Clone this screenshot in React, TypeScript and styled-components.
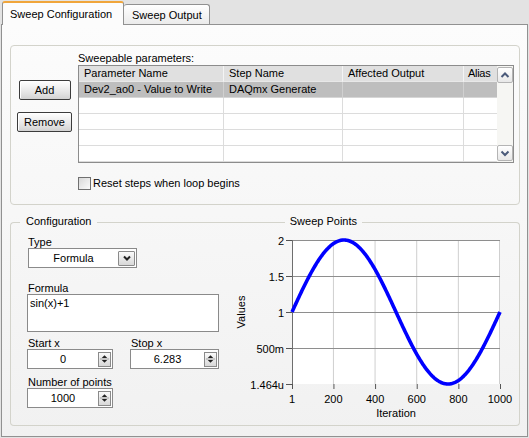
import React from "react";
import styled, { createGlobalStyle } from "styled-components";

const GlobalStyle = createGlobalStyle`
  html, body {
    margin: 0;
    padding: 0;
  }
  body {
    background: #e3e3e3;
    font-family: "Liberation Sans", Arial, sans-serif;
    font-size: 11px;
    color: #000;
  }
  * {
    box-sizing: border-box;
  }
`;

const columns = [
  { title: "Parameter Name", width: 145 },
  { title: "Step Name", width: 119 },
  { title: "Affected Output", width: 121 },
  { title: "Alias", width: 33 },
];

const rows = [
  ["Dev2_ao0 - Value to Write", "DAQmx Generate", "", ""],
  ["", "", "", ""],
  ["", "", "", ""],
  ["", "", "", ""],
  ["", "", "", ""],
];

// plot geometry inside the chart svg
const PL = 62;
const PR = 270;
const PT = 4;
const PB = 148;

const xPos = (it: number) => PL + ((it - 1) / 999) * (PR - PL);
const yPos = (v: number) => PB - (v / 2) * (PB - PT);

const sinePath = (() => {
  const pts: string[] = [];
  for (let i = 1; i <= 1000; i += 3) {
    const v = Math.sin(((i - 1) / 999) * 6.283) + 1;
    pts.push(`${xPos(i).toFixed(2)},${yPos(v).toFixed(2)}`);
  }
  pts.push(`${xPos(1000).toFixed(2)},${yPos(Math.sin(6.283) + 1).toFixed(2)}`);
  return "M" + pts.join(" L");
})();

const yTicks = [
  { v: 2, label: "2" },
  { v: 1.5, label: "1.5" },
  { v: 1, label: "1" },
  { v: 0.5, label: "500m" },
  { v: 0, label: "1.464u" },
];
const xTicks = [1, 200, 400, 600, 800, 1000];

const Chevron = ({ dir }: { dir: "up" | "down" }) => (
  <svg width="12" height="10" viewBox="0 0 12 10">
    <path
      d={dir === "up" ? "M2.5 7 L6 3.5 L9.5 7" : "M2.5 3.5 L6 7 L9.5 3.5"}
      fill="none"
      stroke="#4a5a7a"
      strokeWidth="2"
    />
  </svg>
);

const SpinIcon = () => (
  <svg width="12" height="14" viewBox="0 0 12 14">
    <path d="M3 6 L6 3 L9 6 Z" fill="#222" />
    <path d="M3 8 L6 11 L9 8 Z" fill="#222" />
    <line x1="1" y1="7" x2="11" y2="7" stroke="#9a9a9a" strokeWidth="1" />
  </svg>
);

const Numeric = ({ value, width }: { value: string; width: number }) => (
  <NumBox $w={width}>
    <NumValue>{value}</NumValue>
    <Spinner>
      <SpinIcon />
    </Spinner>
  </NumBox>
);

export default function App() {
  return (
    <>
      <GlobalStyle />
      <Window>
        <TabStrip>
          <Tab $active $w={122}>Sweep Configuration</Tab>
          <Tab $w={86}>Sweep Output</Tab>
        </TabStrip>
        <Panel>
          <ParamBox>
            <ButtonColumn>
              <Button $w={52}>Add</Button>
              <Button $w={55}>Remove</Button>
            </ButtonColumn>
            <TableColumn>
              <SmallLabel>Sweepable parameters:</SmallLabel>
              <Table>
                <Grid>
                  {columns.map((c, i) => (
                    <Cell key={c.title} $kind="head" $last={i === columns.length - 1}>
                      {c.title}
                    </Cell>
                  ))}
                  {rows.map((r, ri) =>
                    r.map((txt, ci) => (
                      <Cell
                        key={`${ri}-${ci}`}
                        $kind={ri === 0 ? "selected" : "body"}
                        $last={ci === columns.length - 1}
                      >
                        {txt}
                      </Cell>
                    ))
                  )}
                </Grid>
                <ScrollBar>
                  <ScrollButton>
                    <Chevron dir="up" />
                  </ScrollButton>
                  <ScrollButton>
                    <Chevron dir="down" />
                  </ScrollButton>
                </ScrollBar>
              </Table>
              <CheckRow>
                <CheckBox />
                <span>Reset steps when loop begins</span>
              </CheckRow>
            </TableColumn>
          </ParamBox>

          <ConfigGroup>
            <GroupHeader>
              <HeaderLine $edge="left" $w={10} />
              <Legend>Configuration</Legend>
              <HeaderLine />
              <Legend $pad={5}>Sweep Points</Legend>
              <HeaderLine $w={148} />
              <HeaderLine $edge="right" $w={10} />
            </GroupHeader>
            <GroupFrame>
              <FormColumn>
                <FieldLabel>Type</FieldLabel>
                <Dropdown>
                  <DropValue>Formula</DropValue>
                  <DropButton>
                    <svg width="10" height="8" viewBox="0 0 10 8">
                      <path d="M2 2.5 L5 5.5 L8 2.5" fill="none" stroke="#222" strokeWidth="2" />
                    </svg>
                  </DropButton>
                </Dropdown>
                <FieldLabel $top={14}>Formula</FieldLabel>
                <FormulaBox>sin(x)+1</FormulaBox>
                <FieldRow>
                  <Field>
                    <FieldLabel>Start x</FieldLabel>
                    <Numeric value="0" width={86} />
                  </Field>
                  <Field>
                    <FieldLabel>Stop x</FieldLabel>
                    <Numeric value="6.283" width={89} />
                  </Field>
                </FieldRow>
                <FieldLabel $top={7}>Number of points</FieldLabel>
                <Numeric value="1000" width={86} />
              </FormColumn>

              <Chart width="285" height="186" viewBox="0 0 285 186">
                <rect x={PL} y={PT} width={PR - PL} height={PB - PT} fill="#ffffff" />
                {xTicks.slice(1, -1).map((t) => (
                  <line key={t} x1={xPos(t)} y1={PT} x2={xPos(t)} y2={PB} stroke="#cfcfcf" />
                ))}
                <line x1={PR - 0.5} y1={PT} x2={PR - 0.5} y2={PB} stroke="#cfcfcf" />
                {yTicks.map((t) => (
                  <g key={t.label}>
                    {t.v > 0 && (
                      <line x1={PL} y1={yPos(t.v) + 0.5} x2={PR} y2={yPos(t.v) + 0.5} stroke="#8e8e8e" />
                    )}
                    <line x1={PL - 6} y1={yPos(t.v) + 0.5} x2={PL} y2={yPos(t.v) + 0.5} stroke="#555" />
                    <text x={PL - 8} y={yPos(t.v) + 4.5} textAnchor="end">
                      {t.label}
                    </text>
                  </g>
                ))}
                <line x1={PL + 0.5} y1={PT} x2={PL + 0.5} y2={PB + 5} stroke="#6e6e6e" />
                {xTicks.map((t) => (
                  <g key={t}>
                    <line x1={xPos(t) + 0.5} y1={PB} x2={xPos(t) + 0.5} y2={PB + 5} stroke="#555" />
                    <text x={xPos(t)} y={PB + 19} textAnchor="middle">
                      {t}
                    </text>
                  </g>
                ))}
                <path d={sinePath} fill="none" stroke="#0000ff" strokeWidth="3.6" strokeLinejoin="round" />
                <text x={(PL + PR) / 2} y={PB + 33} textAnchor="middle">
                  Iteration
                </text>
                <text transform="translate(15,76) rotate(-90)" textAnchor="middle">
                  Values
                </text>
              </Chart>
            </GroupFrame>
          </ConfigGroup>
        </Panel>
      </Window>
    </>
  );
}

const Window = styled.div`
  width: 529px;
  height: 438px;
  background: #e3e3e3;
  display: flex;
  flex-direction: column;
  overflow: hidden;
`;

const TabStrip = styled.div`
  position: relative;
  z-index: 1;
  height: 24px;
  display: flex;
  align-items: flex-end;
  padding-left: 2px;
`;

const Tab = styled.div<{ $active?: boolean; $w: number }>`
  width: ${(p) => p.$w}px;
  height: ${(p) => (p.$active ? "24px" : "20px")};
  margin-bottom: ${(p) => (p.$active ? "-1px" : "0")};
  padding: ${(p) => (p.$active ? "0 0 1px 7px" : "1px 0 0 8px")};
  display: flex;
  align-items: center;
  white-space: nowrap;
  border: 1px solid #919191;
  border-bottom: none;
  border-top: ${(p) => (p.$active ? "2px solid #f0a53a" : "1px solid #919191")};
  border-left: ${(p) => (p.$active ? "1px solid #919191" : "none")};
  border-radius: 3px 3px 0 0;
  background: ${(p) => (p.$active ? "#fcfcfc" : "linear-gradient(#ffffff, #ebebeb)")};
`;

const Panel = styled.div`
  margin-left: 1px;
  width: 527px;
  height: 413px;
  border: 1px solid #919191;
  background: linear-gradient(#fcfcfc, #f1f1f1);
  padding: 20px 0 0 8px;
  display: flex;
  flex-direction: column;
`;

const ParamBox = styled.div`
  width: 510px;
  height: 160px;
  border: 1px solid #d3d3cb;
  border-radius: 4px;
  padding: 5px 0 0 6px;
  display: flex;
  gap: 6px;
`;

const ButtonColumn = styled.div`
  width: 55px;
  padding-top: 29px;
  display: flex;
  flex-direction: column;
  align-items: center;
  gap: 12px;
`;

const Button = styled.div<{ $w: number }>`
  width: ${(p) => p.$w}px;
  height: 20px;
  border: 1px solid #3c3c3c;
  border-radius: 2px;
  background: linear-gradient(#ffffff, #e2e2e2 70%, #d2d2d2);
  box-shadow: inset 1px 1px 0 #ffffff;
  display: flex;
  align-items: center;
  justify-content: center;
`;

const TableColumn = styled.div`
  display: flex;
  flex-direction: column;
`;

const SmallLabel = styled.div`
  line-height: 14px;
  height: 14px;
`;

const Table = styled.div`
  width: 436px;
  height: 98px;
  border: 1px solid #8c8c8c;
  background: #ffffff;
  display: flex;
`;

const Grid = styled.div`
  flex: 1;
  display: grid;
  grid-template-columns: ${columns.map((c) => `${c.width}px`).join(" ")};
  grid-auto-rows: 16px;
  align-content: start;
`;

const Cell = styled.div<{ $kind: "head" | "selected" | "body"; $last?: boolean }>`
  padding-left: ${(p) => (p.$last ? "4px" : "5px")};
  line-height: 15px;
  white-space: nowrap;
  letter-spacing: ${(p) => (p.$last ? "-0.3px" : "0")};
  background: ${(p) =>
    p.$kind === "head" ? "#e0e0e0" : p.$kind === "selected" ? "#bebebe" : "#ffffff"};
  border-bottom: 1px solid
    ${(p) => (p.$kind === "head" ? "#e8e8e8" : p.$kind === "selected" ? "#d6d6d6" : "#dcdcdc")};
  border-right: ${(p) =>
    p.$last
      ? "none"
      : `1px solid ${p.$kind === "head" ? "#f4f4f4" : p.$kind === "selected" ? "#d0d0d0" : "#dcdcdc"}`};
`;

const ScrollBar = styled.div`
  width: 16px;
  background: #f6f6f3;
  display: flex;
  flex-direction: column;
  justify-content: space-between;
  padding: 1px 0;
`;

const ScrollButton = styled.div`
  width: 16px;
  height: 16px;
  border: 1px solid #b4b4b4;
  border-radius: 2px;
  background: linear-gradient(#ffffff, #e8e8e8);
  display: flex;
  align-items: center;
  justify-content: center;
`;

const CheckRow = styled.div`
  margin-top: 14px;
  display: flex;
  align-items: center;
  gap: 2px;
  line-height: 13px;
`;

const CheckBox = styled.div`
  width: 13px;
  height: 13px;
  border: 1px solid #707070;
  background: linear-gradient(135deg, #d8d8d8, #fbfbfb);
`;

const ConfigGroup = styled.div`
  width: 510px;
  margin-top: 10px;
  display: flex;
  flex-direction: column;
`;

const GroupHeader = styled.div`
  height: 13px;
  display: flex;
`;

const HeaderLine = styled.div<{ $edge?: "left" | "right"; $w?: number }>`
  align-self: flex-end;
  height: 6px;
  ${(p) => (p.$w ? `width: ${p.$w}px; flex: none;` : "flex: 1;")}
  border-top: 1px solid #d3d3cb;
  border-left: ${(p) => (p.$edge === "left" ? "1px solid #d3d3cb" : "none")};
  border-right: ${(p) => (p.$edge === "right" ? "1px solid #d3d3cb" : "none")};
  border-top-left-radius: ${(p) => (p.$edge === "left" ? "4px" : "0")};
  border-top-right-radius: ${(p) => (p.$edge === "right" ? "4px" : "0")};
`;

const Legend = styled.div<{ $pad?: number }>`
  padding: 0 ${(p) => p.$pad ?? 6}px;
  line-height: 13px;
  white-space: nowrap;
`;

const GroupFrame = styled.div`
  height: 198px;
  border: 1px solid #d3d3cb;
  border-top: none;
  border-radius: 0 0 4px 4px;
  padding: 8px 0 0 16px;
  display: grid;
  grid-template-columns: 192px 1fr;
  column-gap: 11px;
  align-items: start;
`;

const FormColumn = styled.div`
  display: flex;
  flex-direction: column;
  align-items: flex-start;
`;

const FieldLabel = styled.div<{ $top?: number }>`
  margin-top: ${(p) => p.$top ?? 0}px;
  padding-left: 1px;
  line-height: 12px;
  height: 12px;
`;

const Dropdown = styled.div`
  margin-left: 1px;
  width: 109px;
  height: 20px;
  border: 1px solid #8a8a8a;
  background: #ffffff;
  display: flex;
  align-items: center;
  padding-right: 1px;
`;

const DropValue = styled.div`
  flex: 1;
  text-align: center;
`;

const DropButton = styled.div`
  width: 17px;
  height: 15px;
  border: 1px solid #8a8a8a;
  border-radius: 1px;
  background: linear-gradient(#fafafa, #d8d8d8);
  display: flex;
  align-items: center;
  justify-content: center;
`;

const FormulaBox = styled.div`
  width: 192px;
  height: 38px;
  border: 1px solid #8a8a8a;
  background: #ffffff;
  padding: 2px 2px;
  line-height: 13px;
`;

const FieldRow = styled.div`
  margin-top: 5px;
  display: flex;
  gap: 17px;
`;

const Field = styled.div`
  display: flex;
  flex-direction: column;
`;

const NumBox = styled.div<{ $w: number }>`
  width: ${(p) => p.$w}px;
  height: 20px;
  border: 1px solid #8a8a8a;
  background: #ffffff;
  display: flex;
  align-items: center;
  padding-right: 1px;
`;

const NumValue = styled.div`
  flex: 1;
  text-align: center;
`;

const Spinner = styled.div`
  width: 13px;
  height: 15px;
  border: 1px solid #8a8a8a;
  background: linear-gradient(#fafafa, #d8d8d8);
  display: flex;
  align-items: center;
  justify-content: center;
`;

const Chart = styled.svg`
  display: block;
  font-family: "Liberation Sans", Arial, sans-serif;
  font-size: 11px;
  fill: #000;
`;
